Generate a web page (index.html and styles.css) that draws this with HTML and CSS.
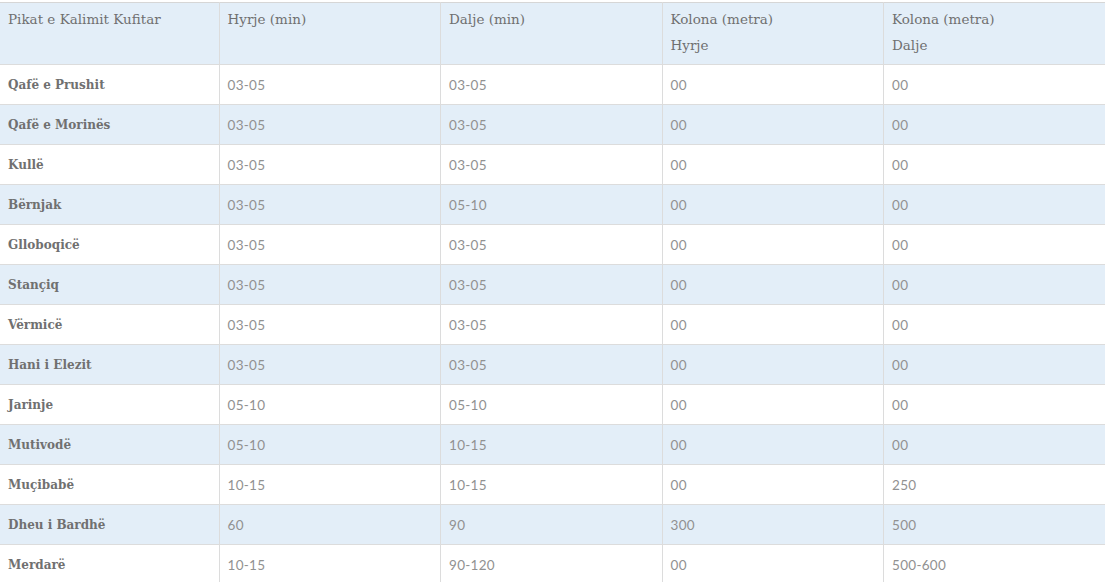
FILE: index.html
```html
<!DOCTYPE html>
<html lang="sq">
<head>
<meta charset="utf-8">
<title>Pikat e Kalimit Kufitar</title>
<link rel="stylesheet" href="styles.css">
</head>
<body>
<table class="border-table">
  <colgroup>
    <col class="col-first">
    <col><col><col><col>
  </colgroup>
  <thead>
    <tr>
      <th>Pikat e Kalimit Kufitar</th>
      <th>Hyrje (min)</th>
      <th>Dalje (min)</th>
      <th>Kolona (metra)<br>Hyrje</th>
      <th>Kolona (metra)<br>Dalje</th>
    </tr>
  </thead>
  <tbody>
    <tr><td class="name">Qafë e Prushit</td><td>03-05</td><td>03-05</td><td>00</td><td>00</td></tr>
    <tr><td class="name">Qafë e Morinës</td><td>03-05</td><td>03-05</td><td>00</td><td>00</td></tr>
    <tr><td class="name">Kullë</td><td>03-05</td><td>03-05</td><td>00</td><td>00</td></tr>
    <tr><td class="name">Bërnjak</td><td>03-05</td><td>05-10</td><td>00</td><td>00</td></tr>
    <tr><td class="name">Glloboqicë</td><td>03-05</td><td>03-05</td><td>00</td><td>00</td></tr>
    <tr><td class="name">Stançiq</td><td>03-05</td><td>03-05</td><td>00</td><td>00</td></tr>
    <tr><td class="name">Vërmicë</td><td>03-05</td><td>03-05</td><td>00</td><td>00</td></tr>
    <tr><td class="name">Hani i Elezit</td><td>03-05</td><td>03-05</td><td>00</td><td>00</td></tr>
    <tr><td class="name">Jarinje</td><td>05-10</td><td>05-10</td><td>00</td><td>00</td></tr>
    <tr><td class="name">Mutivodë</td><td>05-10</td><td>10-15</td><td>00</td><td>00</td></tr>
    <tr><td class="name">Muçibabë</td><td>10-15</td><td>10-15</td><td>00</td><td>250</td></tr>
    <tr><td class="name">Dheu i Bardhë</td><td>60</td><td>90</td><td>300</td><td>500</td></tr>
    <tr><td class="name">Merdarë</td><td>10-15</td><td>90-120</td><td>00</td><td>500-600</td></tr>
  </tbody>
</table>
</body>
</html>
```

FILE: styles.css
```css
html, body {
  margin: 0;
  padding: 0;
  background: #ffffff;
}
body {
  padding-top: 2px;
}
.border-table {
  width: 1105px;
  border-collapse: collapse;
  table-layout: fixed;
  border-top: 1px solid #d6d6d6;
}
.border-table .col-first {
  width: 219px;
}
.border-table th,
.border-table td {
  border-left: 1px solid #dcdcdc;
  border-bottom: 1px solid #dcdcdc;
  padding: 0 8px;
  text-align: left;
}
.border-table th:first-child,
.border-table td:first-child {
  border-left: none;
}
.border-table thead tr {
  background: #e3eef8;
}
.border-table th {
  height: 62px;
  vertical-align: top;
  padding-top: 3px;
  padding-bottom: 0;
  box-sizing: border-box;
  font-family: "DejaVu Serif", "Liberation Serif", serif;
  font-weight: normal;
  font-size: 13.5px;
  line-height: 26px;
  color: #707070;
}
.border-table tbody tr {
  height: 40px;
}
.border-table tbody tr:nth-child(even) {
  background: #e3eef8;
}
.border-table td {
  height: 39px;
  vertical-align: middle;
  font-family: "Lato", "Open Sans", sans-serif;
  font-size: 13.5px;
  color: #919191;
  letter-spacing: 0.3px;
}
.border-table td.name {
  font-family: "DejaVu Serif", "Liberation Serif", serif;
  font-weight: bold;
  font-size: 12px;
  color: #707070;
  letter-spacing: 0;
}
```
